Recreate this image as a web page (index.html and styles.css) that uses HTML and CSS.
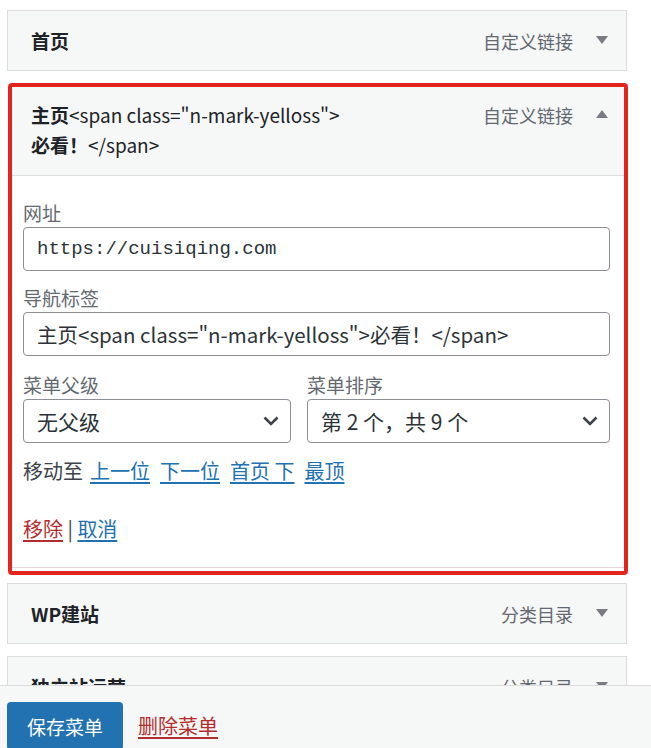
FILE: index.html
```html
<!DOCTYPE html>
<html lang="zh-CN">
<head>
    <meta charset="UTF-8">
    <meta name="viewport" content="width=device-width, initial-scale=1.0">
    <title>菜单</title>
    <link rel="stylesheet" href="styles.css">
</head>
<body>
    <ul class="menu">
        <li class="menu-item">
            <div class="item-bar">
                <span class="item-title"><b>首页</b></span>
                <span class="item-controls">
                    <span class="item-type">自定义链接</span>
                    <svg class="item-arrow" width="12" height="8" viewBox="0 0 12 8"><polygon points="0,0 12,0 6,8"/></svg>
                </span>
            </div>
        </li>

        <li class="menu-item is-open is-marked">
            <div class="item-bar">
                <span class="item-title"><b>主页</b>&lt;span class="n-mark-yelloss"&gt;<br><b>必看！</b>&lt;/span&gt;</span>
                <span class="item-controls">
                    <span class="item-type">自定义链接</span>
                    <svg class="item-arrow" width="12" height="8" viewBox="0 0 12 8"><polygon points="0,8 12,8 6,0"/></svg>
                </span>
            </div>
            <div class="item-settings">
                <div class="field">
                    <label>网址</label>
                    <div class="text-input mono">https://cuisiqing.com</div>
                </div>
                <div class="field">
                    <label>导航标签</label>
                    <div class="text-input">主页&lt;span class="n-mark-yelloss"&gt;必看！&lt;/span&gt;</div>
                </div>
                <div class="field-row">
                    <div class="field">
                        <label>菜单父级</label>
                        <div class="select">
                            <span>无父级</span>
                            <svg width="16" height="10" viewBox="0 0 16 10"><polyline points="1.5,1.5 8,8 14.5,1.5"/></svg>
                        </div>
                    </div>
                    <div class="field">
                        <label>菜单排序</label>
                        <div class="select">
                            <span>第 2 个，共 9 个</span>
                            <svg width="16" height="10" viewBox="0 0 16 10"><polyline points="1.5,1.5 8,8 14.5,1.5"/></svg>
                        </div>
                    </div>
                </div>
                <div class="move-row">
                    <span class="move-label">移动至</span>
                    <a href="#">上一位</a>
                    <a href="#">下一位</a>
                    <a href="#">首页 下</a>
                    <a href="#">最顶</a>
                </div>
                <div class="actions">
                    <a href="#" class="delete">移除</a> | <a href="#">取消</a>
                </div>
            </div>
        </li>

        <li class="menu-item">
            <div class="item-bar">
                <span class="item-title"><b>WP建站</b></span>
                <span class="item-controls">
                    <span class="item-type">分类目录</span>
                    <svg class="item-arrow" width="12" height="8" viewBox="0 0 12 8"><polygon points="0,0 12,0 6,8"/></svg>
                </span>
            </div>
        </li>

        <li class="menu-item">
            <div class="item-bar">
                <span class="item-title"><b>独立站运营</b></span>
                <span class="item-controls">
                    <span class="item-type">分类目录</span>
                    <svg class="item-arrow" width="12" height="8" viewBox="0 0 12 8"><polygon points="0,0 12,0 6,8"/></svg>
                </span>
            </div>
        </li>
    </ul>

    <div class="footer">
        <button class="save-btn">保存菜单</button>
        <a href="#" class="delete">删除菜单</a>
    </div>
</body>
</html>
```

FILE: styles.css
```css
body {
    margin: 0;
    background: #fff;
    font-family: "Noto Sans CJK SC", "Noto Sans", sans-serif;
    color: #1d2327;
    overflow: hidden;
}
.menu {
    list-style: none;
    margin: 10px 0 0;
    padding: 0 24px 0 7px;
}
.menu-item {
    width: 620px;
    box-sizing: border-box;
    border: 1px solid #dcdcde;
    background: #f6f7f7;
    margin-bottom: 12px;
}
.item-bar {
    display: flex;
    justify-content: space-between;
    align-items: center;
    height: 59px;
    padding: 0 18px 0 23px;
}
.item-title {
    font-size: 19px;
    line-height: 30px;
}
.item-title b {
    font-weight: 700;
}
.item-controls {
    display: flex;
    align-items: center;
    gap: 23px;
}
.item-type {
    font-size: 18px;
    color: #646970;
}
.item-arrow {
    fill: #787c82;
    margin-top: -2px;
}

/* the open item, boxed in red */
.is-marked {
    border: 4px solid #e3261d;
    border-radius: 4px;
    margin: 0 -1px 8px 1px;
    padding-bottom: 3px;
    background: #fff;
}
.is-marked .item-bar {
    height: auto;
    align-items: flex-start;
    padding: 13px 16px 15px 19px;
    background: #f6f7f7;
    border-bottom: 1px solid #dcdcde;
}
.is-marked .item-controls {
    height: 30px;
}
.item-settings {
    padding: 24px 14px 24px 11px;
    border-bottom: 1px solid #e6d6d8;
}
.field {
    margin-bottom: 14px;
}
.field label {
    display: block;
    font-size: 19px;
    line-height: 26px;
    color: #646970;
    margin-bottom: 1px;
}
.text-input, .select {
    box-sizing: border-box;
    height: 44px;
    border: 1px solid #8c8f94;
    border-radius: 4px;
    background: #fff;
    padding: 0 13px;
    font-size: 20.5px;
    line-height: 42px;
    color: #2c3338;
    white-space: nowrap;
}
.mono {
    font-family: "Liberation Mono", "DejaVu Sans Mono", monospace;
    font-size: 19px;
}
.field-row {
    display: grid;
    grid-template-columns: 268px 1fr;
    gap: 16px;
    margin-top: 16px;
}
.field-row .field {
    margin-bottom: 0;
}
.select {
    display: flex;
    justify-content: space-between;
    align-items: center;
    padding: 0 11px 0 13px;
    font-size: 21px;
}
.select svg {
    fill: none;
    stroke: #3c434a;
    stroke-width: 2.6;
}
.move-row {
    display: flex;
    gap: 10px;
    margin-top: 14px;
    font-size: 20px;
    line-height: 28px;
    color: #3c434a;
}
.move-label {
    margin-right: -3px;
}
a {
    color: #2271b1;
    text-underline-offset: 3px;
}
a.delete {
    color: #b32d2e;
}
.actions {
    margin-top: 30px;
    font-size: 20px;
    line-height: 28px;
    color: #3c434a;
}

.footer {
    position: fixed;
    left: 0;
    right: 0;
    bottom: 0;
    box-sizing: border-box;
    height: 63px;
    background: #f6f7f7;
    border-top: 1px solid #dcdcde;
    display: flex;
    align-items: flex-start;
    gap: 15px;
    padding: 16px 7px 0;
}
.save-btn {
    flex: none;
    width: 116px;
    height: 48px;
    border: none;
    border-radius: 4px;
    background: #2271b1;
    color: #fff;
    font-family: inherit;
    font-size: 19px;
    cursor: pointer;
}
.footer a {
    font-size: 20px;
    line-height: 48px;
}
```
